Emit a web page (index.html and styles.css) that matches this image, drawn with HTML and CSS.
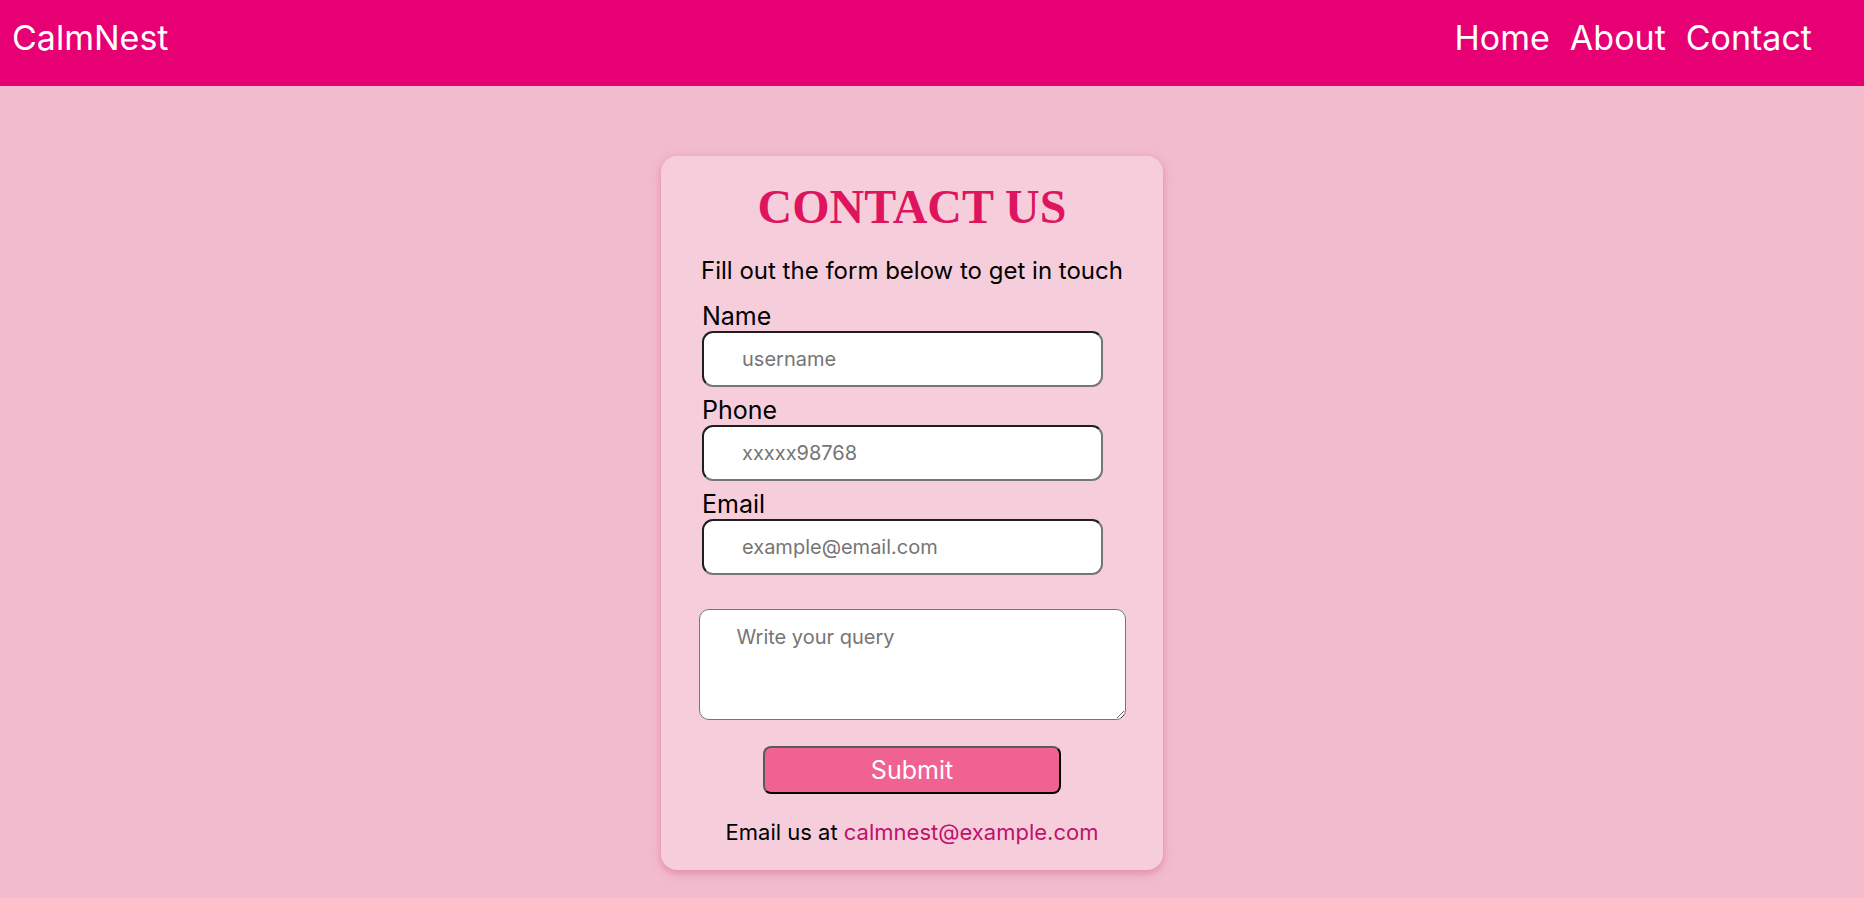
FILE: index.html
```html
<!DOCTYPE html>
<html lang="en">
<head>
<meta charset="utf-8">
<title>CalmNest - Contact</title>
<link rel="stylesheet" href="styles.css">
</head>
<body>
<header class="topbar">
  <div class="brand">CalmNest</div>
  <nav class="nav">
    <a href="#">Home</a>
    <a href="#">About</a>
    <a href="#">Contact</a>
  </nav>
</header>
<main class="page">
  <section class="card">
    <h1 class="title">CONTACT US</h1>
    <p class="subtitle">Fill out the form below to get in touch</p>
    <form class="form">
      <div class="fields">
        <label class="label" for="name">Name</label>
        <input class="field" id="name" type="text" placeholder="username">
        <label class="label" for="phone">Phone</label>
        <input class="field" id="phone" type="text" placeholder="xxxxx98768">
        <label class="label" for="email">Email</label>
        <input class="field" id="email" type="text" placeholder="example@email.com">
      </div>
      <textarea class="query" placeholder="Write your query"></textarea>
      <button class="submit" type="button">Submit</button>
    </form>
    <p class="mailto">Email us at <a href="#">calmnest@example.com</a></p>
  </section>
</main>
</body>
</html>
```
FILE: styles.css
```css
* { box-sizing: border-box; }
html, body { margin: 0; padding: 0; }
body {
  background: #f2bcce;
  font-family: Inter, "Noto Sans", sans-serif;
  color: #000;
}
.topbar {
  height: 86px;
  background: #e70074;
  display: flex;
  align-items: flex-start;
  justify-content: space-between;
  padding: 17px 52px 0 12px;
  color: #fff;
}
.brand { font-size: 34px; line-height: 41px; }
.nav { display: flex; gap: 20px; }
.nav a { color: #fff; text-decoration: none; font-size: 34px; line-height: 41px; }
.page {
  display: flex;
  justify-content: center;
  padding: 70px 40px 30px 0;
}
.card {
  width: 502px;
  background: #f6cedb;
  border-radius: 16px;
  box-shadow: 0 3px 10px rgba(214, 100, 140, 0.6);
  padding: 22px 0 24px;
  text-align: center;
}
.title {
  margin: 0;
  font-family: "Liberation Serif", serif;
  font-weight: bold;
  font-size: 48px;
  color: #df145e;
  line-height: 57.6px;
}
.subtitle {
  margin: 20px 0 0;
  font-size: 24px;
  line-height: 29px;
}
.form {
  margin-top: 19px;
  display: flex;
  flex-direction: column;
  align-items: center;
}
.fields {
  align-self: flex-start;
  margin-left: 41px;
  width: 401px;
  display: flex;
  flex-direction: column;
  text-align: left;
}
.label { font-size: 25px; line-height: 24px; margin: 11px 0 3px; }
.label:first-child { margin-top: 0; }
.field {
  width: 401px;
  height: 56px;
  border: 2px solid;
  border-color: #1f1f1f #767676 #767676 #1f1f1f;
  border-radius: 11px;
  background: #fff;
  padding: 0 0 0 38px;
  font-family: Inter, sans-serif;
  font-size: 20px;
  margin: 0;
}
.field::placeholder, .query::placeholder { color: #757575; }
.query {
  margin-top: 34px;
  width: 427px;
  height: 111px;
  border: 1px solid #767676;
  border-radius: 10px;
  background: #fff;
  padding: 15px 37px 13px;
  font-family: Inter, sans-serif;
  font-size: 20px;
  line-height: 24px;
}
.submit {
  margin-top: 26px;
  width: 298px;
  height: 48px;
  background: #ef6292;
  border: 2px solid;
  border-color: #5a5a5a #000 #000 #5a5a5a;
  border-radius: 8px;
  color: #fff;
  font-family: Inter, sans-serif;
  font-size: 25px;
}
.mailto {
  margin: 25px 0 0;
  font-size: 22px;
  line-height: 27px;
}
.mailto a { color: #c0126a; text-decoration: none; }
```
